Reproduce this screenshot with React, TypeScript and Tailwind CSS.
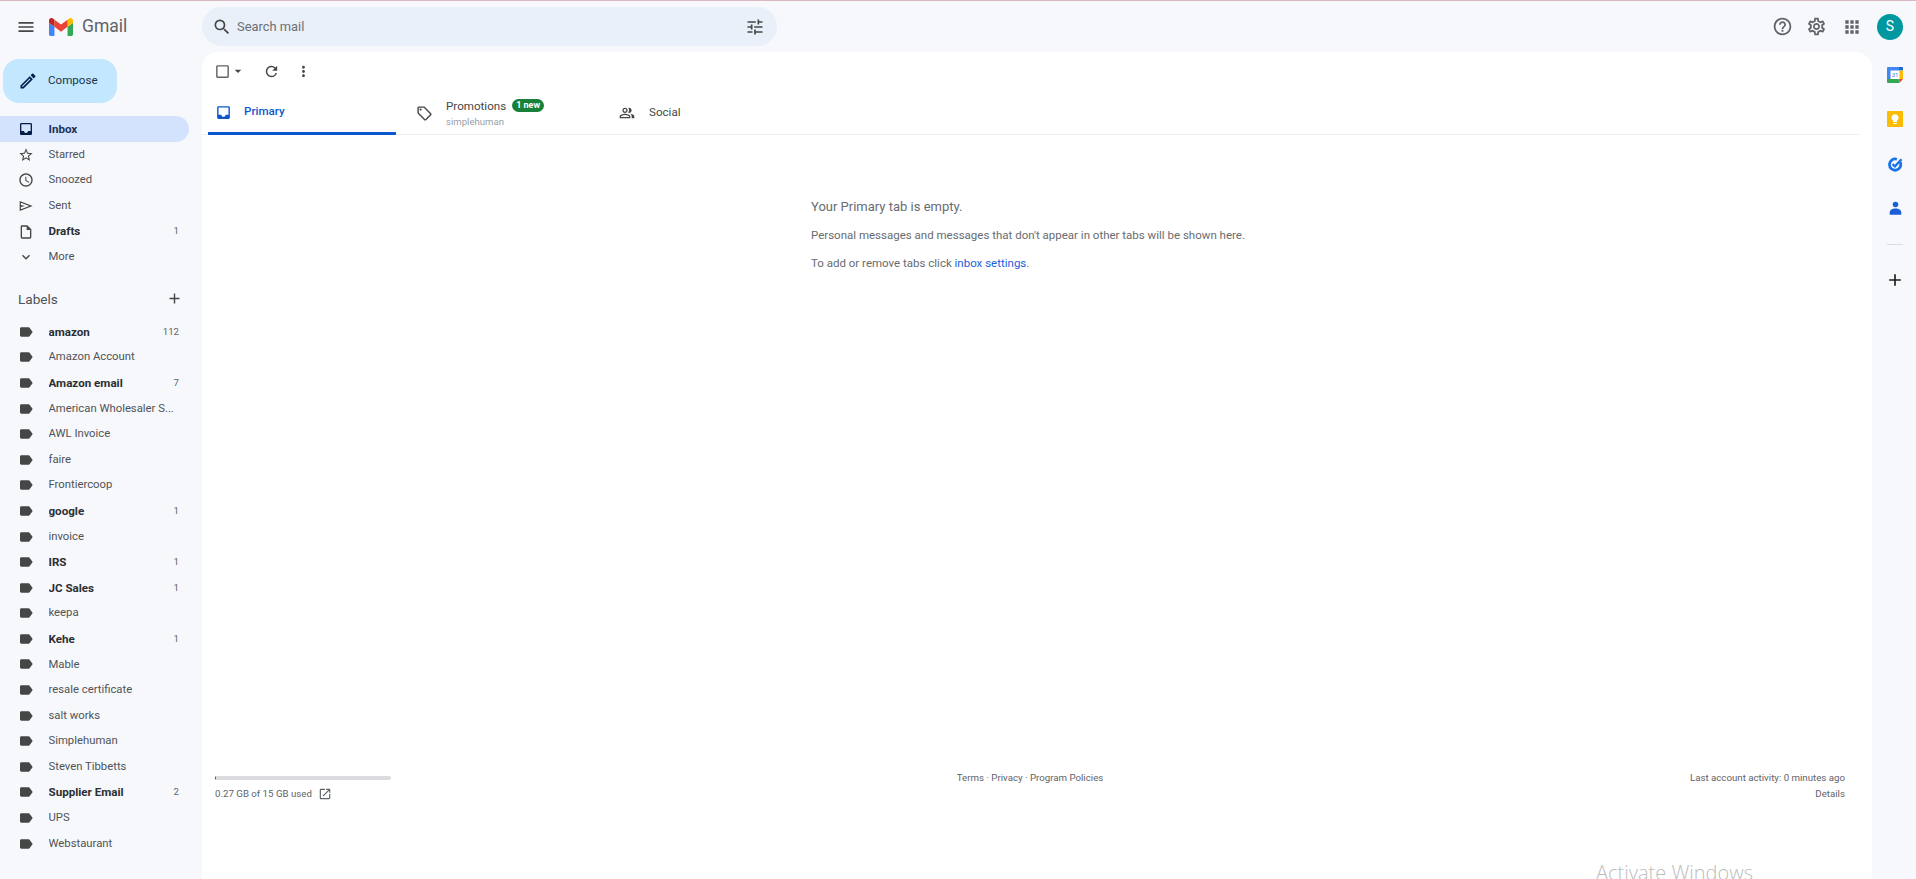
import {
  MdMenu,
  MdSearch,
  MdTune,
  MdHelpOutline,
  MdOutlineSettings,
  MdApps,
  MdInbox,
  MdStarBorder,
  MdAccessTime,
  MdOutlineInsertDriveFile,
  MdExpandMore,
  MdLabel,
  MdAdd,
  MdRefresh,
  MdMoreVert,
  MdArrowDropDown,
  MdCheckBoxOutlineBlank,
  MdOutlineLocalOffer,
  MdOutlinePeopleAlt,
  MdOpenInNew,
  MdOutlineCreate,
} from "react-icons/md";

const labels: { name: string; count?: number }[] = [
  { name: "amazon", count: 112 },
  { name: "Amazon Account" },
  { name: "Amazon email", count: 7 },
  { name: "American Wholesaler S..." },
  { name: "AWL Invoice" },
  { name: "faire" },
  { name: "Frontiercoop" },
  { name: "google", count: 1 },
  { name: "invoice" },
  { name: "IRS", count: 1 },
  { name: "JC Sales", count: 1 },
  { name: "keepa" },
  { name: "Kehe", count: 1 },
  { name: "Mable" },
  { name: "resale certificate" },
  { name: "salt works" },
  { name: "Simplehuman" },
  { name: "Steven Tibbetts" },
  { name: "Supplier Email", count: 2 },
  { name: "UPS" },
  { name: "Webstaurant" },
];

function GmailLogo() {
  return (
    <svg viewBox="52 42 88 66" className="w-[24px] h-[18px]">
      <path fill="#4285f4" d="M58 108h14V74L52 59v43c0 3.32 2.69 6 6 6" />
      <path fill="#34a853" d="M120 108h14c3.32 0 6-2.69 6-6V59l-20 15" />
      <path fill="#fbbc04" d="M120 48v26l20-15v-8c0-7.42-8.47-11.65-14.4-7.2" />
      <path fill="#ea4335" d="M72 74V48l24 18 24-18v26L96 92" />
      <path fill="#c5221f" d="M52 51v8l20 15V48l-5.6-4.2c-5.94-4.45-14.4-.22-14.4 7.2" />
    </svg>
  );
}

function SentIcon() {
  return (
    <svg viewBox="0 0 24 24" className="w-[16px] h-[16px]" fill="#444746">
      <path
        fillRule="evenodd"
        d="M2.5 4.5 22 12 2.5 19.5v-15Zm1.8 2.7v3.3l6.2 1.5-6.2 1.5v3.3L17 12 4.3 7.2Z"
      />
    </svg>
  );
}

function NavRow({
  icon,
  text,
  count,
  bold,
  active,
}: {
  icon: React.ReactNode;
  text: string;
  count?: number;
  bold?: boolean;
  active?: boolean;
}) {
  return (
    <div
      className={`flex items-center h-[25.6px] w-[189px] pl-[18px] pr-[10px] rounded-r-full ${
        active
          ? "bg-[#d3e3fd] text-[#1c3158] font-bold h-[26px] text-[11.6px]"
          : bold
            ? "text-[#2d2f32] font-bold text-[11.6px]"
            : "text-[#505356] text-[11.3px]"
      }`}
    >
      <span className="w-[30.5px] shrink-0 flex items-center">{icon}</span>
      <span className="flex-1 pt-[1px] truncate whitespace-nowrap">{text}</span>
      {count !== undefined && (
        <span className="text-[9.6px] font-normal text-[#5f6368]">{count}</span>
      )}
    </div>
  );
}

function Sidebar() {
  return (
    <aside className="w-[202px] shrink-0 flex flex-col">
      <div className="pl-[3px] pt-[7px]">
        <div className="w-[114px] h-[44px] rounded-2xl bg-[#c2e7ff] flex items-center pl-[15px] text-[11.6px] text-[#1c3448]">
          <MdOutlineCreate className="w-[20px] h-[20px] mr-[10px] text-[#041e49]" />
          Compose
        </div>
      </div>
      <nav className="mt-[13px] flex flex-col">
        <NavRow active text="Inbox" icon={<MdInbox className="w-[16px] h-[16px] text-[#041e49]" />} />
        <NavRow text="Starred" icon={<MdStarBorder className="w-[16px] h-[16px] text-[#444746]" />} />
        <NavRow text="Snoozed" icon={<MdAccessTime className="w-[16px] h-[16px] text-[#444746]" />} />
        <NavRow text="Sent" icon={<SentIcon />} />
        <NavRow
          bold
          text="Drafts"
          count={1}
          icon={<MdOutlineInsertDriveFile className="w-[16px] h-[16px] text-[#444746]" />}
        />
        <NavRow text="More" icon={<MdExpandMore className="w-[16px] h-[16px] text-[#444746]" />} />
      </nav>
      <div className="mt-[16px] h-[26px] flex items-center justify-between pl-[18px] pr-[6px] w-[189px] text-[13.6px] text-[#505356]">
        Labels
        <MdAdd className="w-[17px] h-[17px] text-[#444746]" />
      </div>
      <div className="mt-[7px] flex flex-col">
        {labels.map((l) => (
          <NavRow
            key={l.name}
            text={l.name}
            count={l.count}
            bold={l.count !== undefined}
            icon={<MdLabel className="w-[16px] h-[16px] text-[#444746]" />}
          />
        ))}
      </div>
    </aside>
  );
}

function Toolbar() {
  return (
    <div className="h-[38px] flex items-center pl-[12px] text-[#5f6368] shrink-0">
      <MdCheckBoxOutlineBlank className="w-[17px] h-[17px]" />
      <MdArrowDropDown className="w-[16px] h-[16px] -ml-[1px] text-[#444746]" />
      <MdRefresh className="w-[17px] h-[17px] ml-[17px] text-[#444746]" />
      <MdMoreVert className="w-[17px] h-[17px] ml-[15px] text-[#444746]" />
    </div>
  );
}

function Tabs() {
  return (
    <div className="h-[45px] flex border-b border-[#f0f0f0] mr-[12px] shrink-0 text-[11.6px]">
      <div className="ml-[6px] w-[188px] pt-[2px] border-b-[3px] -mb-px border-[#0b57d0] flex items-center pl-[7px] text-[#0b57d0] font-medium">
        <MdInbox className="w-[17px] h-[17px] mr-[12px]" />
        Primary
      </div>
      <div className="w-[223px] pt-[2px] flex items-center pl-[20px] text-[#444746]">
        <MdOutlineLocalOffer className="w-[17px] h-[17px] mr-[13px] text-[#444746]" />
        <div className="flex flex-col">
          <div className="flex items-center gap-[6px] leading-[16px]">
            Promotions
            <span className="h-[13px] px-[4px] rounded-full bg-[#188038] text-white text-[9px] font-bold leading-[13px]">
              1 new
            </span>
          </div>
          <span className="text-[9.6px] leading-[14px] mt-[1px] text-[#9aa0a6]">simplehuman</span>
        </div>
      </div>
      <div className="flex pt-[2px] items-center text-[#444746]">
        <MdOutlinePeopleAlt className="w-[16px] h-[16px] mr-[14px] text-[#444746]" />
        Social
      </div>
    </div>
  );
}

function EmptyState() {
  return (
    <div className="flex-1 pl-[609px] pt-[62px] text-[#686c70]">
      <p className="text-[13px] leading-[20px]">Your Primary tab is empty.</p>
      <p className="text-[11.5px] leading-[16px] mt-[10px]">
        Personal messages and messages that don't appear in other tabs will be shown here.
      </p>
      <p className="text-[11.5px] leading-[16px] mt-[12px]">
        To add or remove tabs click <span className="text-[#1a5fd8]">inbox settings</span>.
      </p>
    </div>
  );
}

function Footer() {
  return (
    <div className="h-[105px] shrink-0 grid grid-cols-3 pl-[13px] pr-[27px] text-[9.7px] text-[#5f6368]">
      <div>
        <div className="w-[176px] h-[4px] mt-[2px] rounded-full bg-[#dadce0] overflow-hidden">
          <div className="w-[1px] h-full bg-[#444746]" />
        </div>
        <div className="flex items-center mt-[7px] h-[14px]">
          0.27 GB of 15 GB used
          <MdOpenInNew className="w-[14px] h-[14px] ml-[6px] text-[#5f6368]" />
        </div>
      </div>
      <div className="text-center leading-[14px] -mt-[3px]">Terms · Privacy · Program Policies</div>
      <div className="text-right leading-[14px] -mt-[3px]">
        <div>Last account activity: 0 minutes ago</div>
        <div className="mt-[2px]">Details</div>
      </div>
    </div>
  );
}

function SidePanel() {
  return (
    <aside className="w-[44px] shrink-0 flex flex-col items-center pl-[2px]">
      <svg viewBox="0 0 16 16" className="w-[16px] h-[16px] mt-[15px]">
        <rect width="16" height="16" rx="1" fill="#fff" />
        <path fill="#4285f4" d="M1 0h11v3.5H3.5V12H0V1a1 1 0 0 1 1-1Z" />
        <path fill="#1967d2" d="M12 0h3a1 1 0 0 1 1 1v2.5h-4z" />
        <path fill="#fbbc04" d="M12.5 3.5H16V12h-3.5z" />
        <path fill="#34a853" d="M0 12h12.5v4H1a1 1 0 0 1-1-1z" />
        <path fill="#ea4335" d="M12.5 12H16l-3.5 4z" />
        <text x="8" y="10" fontSize="6" fontFamily="Roboto" textAnchor="middle" fill="#4285f4">
          31
        </text>
      </svg>
      <svg viewBox="0 0 16 16" className="w-[16px] h-[16px] mt-[28px]">
        <rect width="16" height="16" rx="1" fill="#fbbc04" />
        <path fill="#fff" d="M8 3.2a3.5 3.5 0 0 0-2 6.4V11h4V9.6a3.5 3.5 0 0 0-2-6.4ZM6.2 12h3.6v1H6.2z" />
      </svg>
      <svg viewBox="0 0 16 16" className="w-[15px] h-[15px] mt-[30px]">
        <path fill="none" stroke="#1a73e8" strokeWidth="3" d="M13 5.5A6 6 0 1 1 9.5 2.4" />
        <path fill="none" stroke="#1a73e8" strokeWidth="2.4" d="M4.8 7.6 7.4 10 14.4 2.4" />
      </svg>
      <svg viewBox="0 0 14 16" className="w-[13px] h-[15px] mt-[29px]">
        <circle cx="7" cy="3.6" r="3" fill="#1a5fd8" />
        <path fill="#1a5fd8" d="M0.8 14.6V12c0-2.5 3-4 6.2-4s6.2 1.5 6.2 4v2.6z" />
      </svg>
      <div className="w-[16px] h-px bg-[#dadce0] mt-[28px]" />
      <MdAdd className="w-[20px] h-[20px] mt-[25px] text-[#1f1f1f]" />
    </aside>
  );
}

export default function App() {
  return (
    <div className="relative h-[879px] w-[1916px] overflow-hidden flex flex-col bg-[#f6f8fc] font-['Roboto',sans-serif]">
      <div className="h-px bg-[#d8b9bf] shrink-0" />
      {/* Top bar */}
      <header className="h-[51px] shrink-0 flex items-center">
        <div className="w-[202px] shrink-0 flex items-center pl-[16px]">
          <MdMenu className="w-[20px] h-[20px] text-[#444746] mr-[13px]" />
          <GmailLogo />
          <span className="ml-[9px] text-[17.5px] text-[#5f6368]">Gmail</span>
        </div>
        <div className="w-[575px] h-[39px] rounded-full bg-[#e9f0fa] flex items-center pl-[10px] pr-[12px]">
          <MdSearch className="w-[20px] h-[20px] text-[#444746]" />
          <span className="ml-[5px] flex-1 text-[12.9px] text-[#6b6f73]">Search mail</span>
          <MdTune className="w-[20px] h-[20px] text-[#444746]" />
        </div>
        <div className="ml-auto flex items-center pr-[13px]">
          <MdHelpOutline className="w-[21px] h-[21px] text-[#5f6368]" />
          <MdOutlineSettings className="w-[21px] h-[21px] ml-[13px] text-[#5f6368]" />
          <MdApps className="w-[20px] h-[20px] ml-[15px] text-[#5f6368]" />
          <div className="w-[26px] h-[26px] ml-[15px] rounded-full bg-[#00979f] text-white text-[14px] flex items-center justify-center">
            S
          </div>
        </div>
      </header>
      <div className="flex-1 flex min-h-0">
        <Sidebar />
        <main className="flex-1 min-w-0 bg-white rounded-t-2xl flex flex-col">
          <Toolbar />
          <Tabs />
          <EmptyState />
          <Footer />
        </main>
        <SidePanel />
      </div>
      {/* Windows activation watermark */}
      <span className="absolute left-[1596px] top-[859px] text-[20px] leading-[28px] font-['Open_Sans',sans-serif] font-light text-[#bdbdbd]">
        Activate Windows
      </span>
    </div>
  );
}
